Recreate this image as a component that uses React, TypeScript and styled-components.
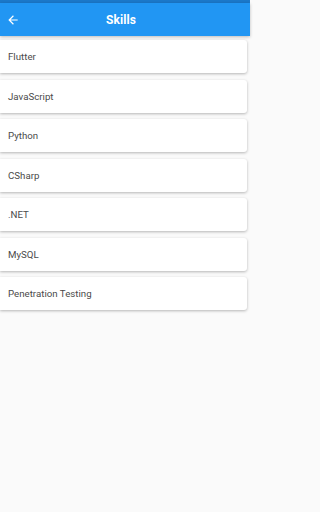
import React, { FunctionComponent } from 'react';
import styled, { createGlobalStyle } from 'styled-components';

const GlobalStyle = createGlobalStyle`
	html, body { margin: 0; padding: 0; background: #fafafa; }
	body { font-family: Roboto, 'Liberation Sans', sans-serif; }
`;

const skills = ['Flutter', 'JavaScript', 'Python', 'CSharp', '.NET', 'MySQL', 'Penetration Testing'];

const Screen = styled.div`
	width: 250px;
	min-height: 512px;
	background: #fafafa;
`;

const StatusBar = styled.div`
	height: 3px;
	background: #1b78c9;
`;

const AppBar = styled.header`
	height: 33px;
	background: #2196f3;
	display: flex;
	align-items: center;
	box-shadow: 0 1px 3px rgba(0, 0, 0, 0.25);
`;

const BackButton = styled.button`
	border: none;
	background: none;
	padding: 0;
	margin-left: 6px;
	width: 14px;
	height: 14px;
	display: flex;
	align-items: center;
	justify-content: center;
	color: #fff;
`;

const Title = styled.h1`
	flex: 1;
	margin: 0 28px 0 0;
	text-align: center;
	color: #fff;
	font-size: 12px;
	font-weight: 700;
	letter-spacing: 0.1px;
`;

const List = styled.div`
	padding-top: 4px;
	display: flex;
	flex-direction: column;
	gap: 6.5px;
`;

const Card = styled.div`
	height: 33px;
	margin-right: 3px;
	background: #fff;
	border-radius: 0 3px 3px 0;
	box-shadow: 0 1px 3px rgba(0, 0, 0, 0.28);
	display: flex;
	align-items: center;
	padding-left: 8px;
`;

const CardText = styled.span`
	font-size: 9.7px;
	color: #4a4a4a;
`;

const BackArrow: FunctionComponent = () => (
	<svg width="14" height="14" viewBox="0 0 24 24" fill="currentColor">
		<path d="M20 11H7.83l5.59-5.59L12 4l-8 8 8 8 1.41-1.41L7.83 13H20v-2z" />
	</svg>
);

const App: FunctionComponent = () => {
	return (
		<Screen>
			<GlobalStyle />
			<StatusBar />
			<AppBar>
				<BackButton>
					<BackArrow />
				</BackButton>
				<Title>Skills</Title>
			</AppBar>
			<List>
				{skills.map((skill) => (
					<Card key={skill}>
						<CardText>{skill}</CardText>
					</Card>
				))}
			</List>
		</Screen>
	);
};

export default App;
